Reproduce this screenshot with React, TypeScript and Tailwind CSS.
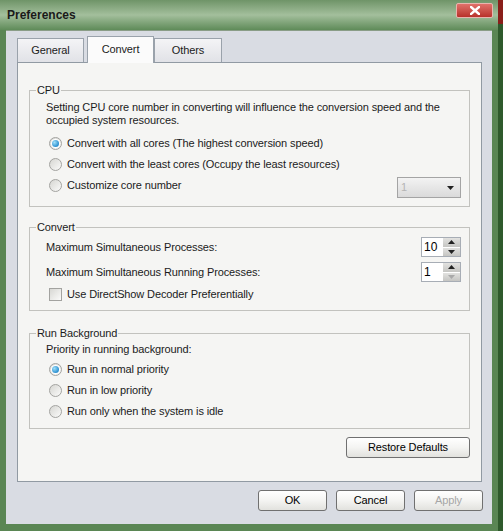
import React from 'react';

function Radio({ checked }: { checked?: boolean }) {
  return (
    <span className="flex h-[13px] w-[13px] shrink-0 items-center justify-center rounded-full border border-[#a3a3a0] bg-gradient-to-br from-[#d6d6d2] to-[#fbfbfa]">
      {checked && (
        <span className="flex h-[9px] w-[9px] items-center justify-center rounded-full bg-white">
          <span className="h-[7px] w-[7px] rounded-full bg-[radial-gradient(circle_at_35%_35%,#9fe0fa,#2b8fcf_70%)]" />
        </span>
      )}
    </span>
  );
}

function RadioRow({ label, checked }: { label: string; checked?: boolean }) {
  return (
    <div className="flex h-[21px] items-center pl-[3px]">
      <Radio checked={checked} />
      <span className="ml-[5px]">{label}</span>
    </div>
  );
}

function Arrow({ up, faded }: { up?: boolean; faded?: boolean }) {
  return (
    <svg width="7" height="4" viewBox="0 0 7 4">
      <path d={up ? 'M0 4 L3.5 0 L7 4 Z' : 'M0 0 L3.5 4 L7 0 Z'} fill={faded ? '#a9a9a9' : '#222'} />
    </svg>
  );
}

function Spinner({ value, downFaded }: { value: string; downFaded?: boolean }) {
  return (
    <div className="flex h-[20px] w-[40px] border border-[#a7adb5] bg-white">
      <div className="flex-1 pl-[2px] text-[12px] leading-[18px] tracking-normal text-black">{value}</div>
      <div className="flex w-[17px] flex-col gap-px bg-white">
        <div className="flex flex-1 items-center justify-center bg-gradient-to-b from-[#e2e2e0] to-[#c5c5c2]">
          <Arrow up />
        </div>
        <div className="flex flex-1 items-center justify-center bg-gradient-to-b from-[#e2e2e0] to-[#c5c5c2]">
          <Arrow faded={downFaded} />
        </div>
      </div>
    </div>
  );
}

function Group({ title, children }: { title: string; children: React.ReactNode }) {
  return (
    <fieldset className="border border-[#c2c2be] pl-[6px] pr-[8px]">
      <legend className="px-[1px] leading-[13px]">{title}</legend>
      <div className="pl-[10px]">{children}</div>
    </fieldset>
  );
}

function Btn({ label, disabled, className }: { label: string; disabled?: boolean; className?: string }) {
  return (
    <button
      className={`h-[21px] rounded-[3px] border border-[#707070] bg-gradient-to-b from-[#ffffff] via-[#f4f4f2] to-[#e2e2de] leading-[19px] ${
        disabled ? 'text-[#a6a6a6]' : 'text-black'
      } ${className ?? ''}`}
    >
      {label}
    </button>
  );
}

export default function App() {
  return (
    <div className="flex h-[531px] w-[503px] overflow-hidden bg-[#2d4a2a] font-['Liberation_Sans',Arial,sans-serif] text-[11px] tracking-[-0.12px] text-[#1b1b1b]">
      {/* window */}
      <div className="flex h-full w-[498px] flex-col bg-[#5a8654]">
        {/* title bar */}
        <div className="flex h-[30px] items-start justify-between bg-gradient-to-b from-[#6f9468] via-[#a3bf9c] to-[#5f8b59] pl-[7px] pr-[5px]">
          <span className="mt-[8px] text-[12px] font-bold leading-[15px] tracking-normal text-[#1a1a1a]">Preferences</span>
          <div className="mt-[3px] flex h-[15px] w-[37px] items-center justify-center rounded-[2px] border border-[#e9b4ae] bg-gradient-to-b from-[#e0716a] to-[#b8302a]">
            <svg width="10" height="9" viewBox="0 0 10 9">
              <path d="M1 1 L9 8 M9 1 L1 8" stroke="white" strokeWidth="2.4" strokeLinecap="square" />
            </svg>
          </div>
        </div>

        {/* client area */}
        <div className="mx-[6px] mb-[7px] flex flex-1 flex-col border-t border-[#8a9d87] bg-[#d9dce3] pl-[10px] pr-[9px]">
          {/* tabs */}
          <div className="ml-px mt-[5px] flex h-[26px] items-end">
            <div className="flex h-[24px] w-[67px] items-center justify-center border border-b-0 border-[#9aa2ab] bg-gradient-to-b from-[#f4f4f6] to-[#e1e2e7]">
              General
            </div>
            <div className="relative z-10 ml-[3px] -mb-px flex h-[27px] w-[67px] items-center justify-center border border-b-0 border-[#9aa2ab] bg-[#fbfbfb] pb-[2px]">
              Convert
            </div>
            <div className="flex h-[24px] w-[68px] items-center justify-center border border-b-0 border-[#9aa2ab] bg-gradient-to-b from-[#f4f4f6] to-[#e1e2e7]">
              Others
            </div>
          </div>

          {/* panel */}
          <div className="ml-px flex h-[420px] w-[465px] flex-col border border-[#919aa3] bg-[#f5f5f3] px-[11px] pt-[21px]">
            <Group title="CPU">
              <div className="pt-[4px] leading-[13px]">
                Setting CPU core number in converting will influence the conversion speed and the
                <br />
                occupied system resources.
              </div>
              <div className="mt-[6px] pb-[10px]">
                <RadioRow label="Convert with all cores (The highest conversion speed)" checked />
                <RadioRow label="Convert with the least cores (Occupy the least resources)" />
                <div className="flex h-[21px] items-center justify-between">
                  <div className="flex items-center pl-[3px]">
                    <Radio />
                    <span className="ml-[5px]">Customize core number</span>
                  </div>
                  <div className="flex h-[21px] w-[64px] translate-y-[2px] items-center justify-between border border-[#a4a4a4] bg-gradient-to-b from-[#f3f3f3] to-[#dadada] pl-[3px] pr-[6px]">
                    <span className="text-[#b4b4b4]">1</span>
                    <Arrow />
                  </div>
                </div>
              </div>
            </Group>

            <div className="mt-[14px]">
              <Group title="Convert">
                <div className="pt-[3px] pb-[6px]">
                  <div className="flex h-[20px] items-center justify-between">
                    <span>Maximum Simultaneous Processes:</span>
                    <Spinner value="10" />
                  </div>
                  <div className="mt-[5px] flex h-[20px] items-center justify-between">
                    <span>Maximum Simultaneous Running Processes:</span>
                    <Spinner value="1" downFaded />
                  </div>
                  <div className="mt-[2px] flex h-[20px] items-center pl-[3px]">
                    <span className="h-[13px] w-[13px] border border-[#a3a3a0] bg-gradient-to-br from-[#d8d8d4] to-[#fbfbfa]" />
                    <span className="ml-[5px]">Use DirectShow Decoder Preferentially</span>
                  </div>
                </div>
              </Group>
            </div>

            <div className="mt-[16px]">
              <Group title="Run Background">
                <div className="pt-[3px] leading-[13px]">Priority in running background:</div>
                <div className="mt-[3px] pb-[6px]">
                  <RadioRow label="Run in normal priority" checked />
                  <RadioRow label="Run in low priority" />
                  <RadioRow label="Run only when the system is idle" />
                </div>
              </Group>
            </div>

            <div className="mt-[8px] flex justify-end">
              <Btn label="Restore Defaults" className="w-[124px]" />
            </div>
          </div>

          {/* dialog buttons */}
          <div className="mt-[8px] flex justify-end gap-[9px]">
            <Btn label="OK" className="w-[69px]" />
            <Btn label="Cancel" className="w-[69px]" />
            <Btn label="Apply" disabled className="w-[69px]" />
          </div>
        </div>
      </div>

      {/* neighbouring window edge */}
      <div className="flex w-[5px] flex-col">
        <div className="h-[24px] bg-[#8a1f1a]" />
        <div className="flex-1 bg-[#2f5a2c]" />
      </div>
    </div>
  );
}
